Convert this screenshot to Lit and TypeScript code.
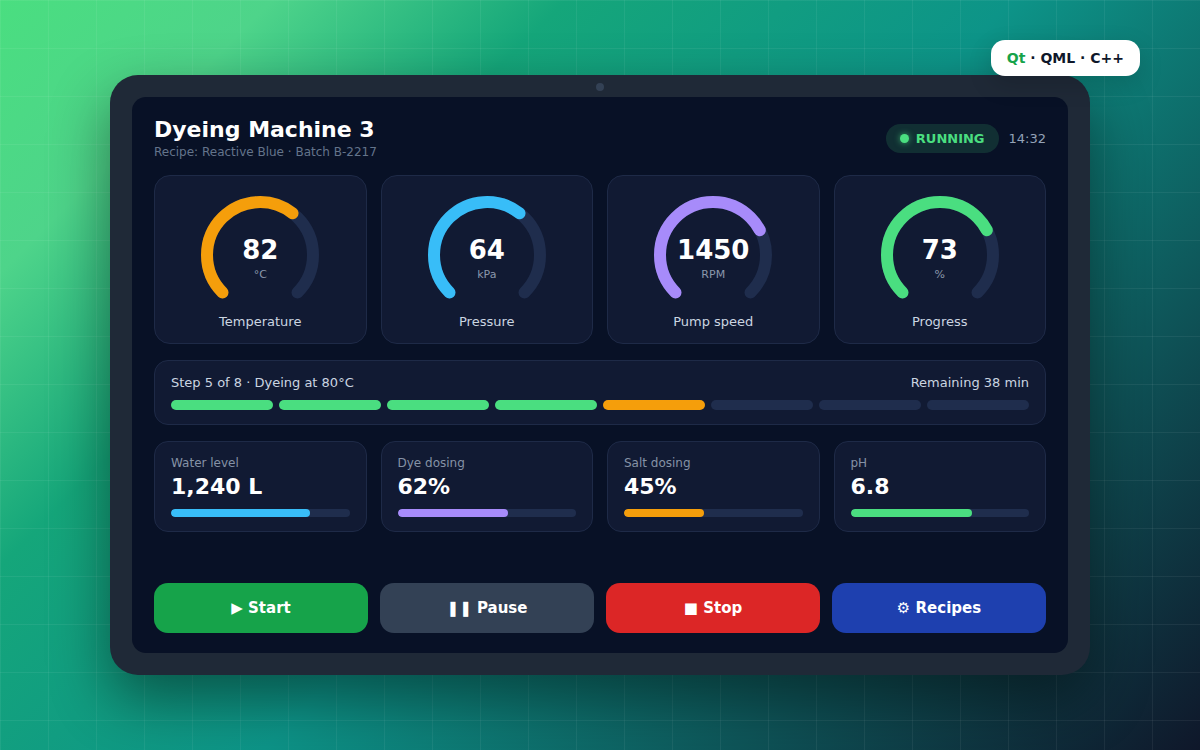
import {LitElement, html, css} from 'lit';
import {customElement} from 'lit/decorators.js';

const gauges = [
  {value: '82', unit: '°C', label: 'Temperature', color: '#f59e0b', frac: 0.64},
  {value: '64', unit: 'kPa', label: 'Pressure', color: '#38bdf8', frac: 0.64},
  {value: '1450', unit: 'RPM', label: 'Pump speed', color: '#a78bfa', frac: 0.73},
  {value: '73', unit: '%', label: 'Progress', color: '#4ade80', frac: 0.73},
];

const steps = ['#4ade80', '#4ade80', '#4ade80', '#4ade80', '#f59e0b', '', '', ''];

const tiles = [
  {label: 'Water level', value: '1,240 L', color: '#38bdf8', pct: 78},
  {label: 'Dye dosing', value: '62%', color: '#a78bfa', pct: 62},
  {label: 'Salt dosing', value: '45%', color: '#f59e0b', pct: 45},
  {label: 'pH', value: '6.8', color: '#4ade80', pct: 68},
];

const buttons = [
  {text: '▶ Start', cls: 'start'},
  {text: '❚❚ Pause', cls: 'pause'},
  {text: '■ Stop', cls: 'stop'},
  {text: '⚙ Recipes', cls: 'recipes'},
];

const arc = 'M22.5 97.5A53 53 0 1 1 97.5 97.5';

@customElement('app-root')
export class AppRoot extends LitElement {
  static styles = css`
    :host {
      display: flex;
      align-items: center;
      justify-content: center;
      position: relative;
      width: 1200px;
      height: 750px;
      overflow: hidden;
      font-family: 'DejaVu Sans', sans-serif;
      background:
        linear-gradient(rgba(255,255,255,0.06) 1px, transparent 1px) 0 0 / 48px 48px,
        linear-gradient(90deg, rgba(255,255,255,0.06) 1px, transparent 1px) 0 0 / 48px 48px,
        linear-gradient(135deg, #4ade80 0%, #4ed48a 14%, #15a67a 29%, #0d9488 52%, #0f172a 100%);
    }
    .tag {
      position: absolute;
      top: 40px;
      right: 60px;
      height: 36px;
      padding: 0 16px;
      display: flex;
      align-items: center;
      background: #fff;
      border-radius: 14px;
      font-size: 14px;
      font-weight: 700;
      color: #0f172a;
      white-space: pre;
      box-shadow: 0 8px 24px rgba(0,0,0,0.15);
    }
    .tag b { color: #16a34a; }
    .bezel {
      position: relative;
      box-sizing: border-box;
      width: 980px;
      height: 600px;
      padding: 22px;
      background: #1f2937;
      border-radius: 28px;
      box-shadow: 0 24px 60px rgba(0,0,0,0.45);
      display: flex;
    }
    .cam {
      position: absolute;
      top: 8px;
      left: 486px;
      width: 8px;
      height: 8px;
      border-radius: 50%;
      background: #334155;
    }
    .screen {
      flex: 1;
      box-sizing: border-box;
      padding: 20px 22px;
      background: #081126;
      border-radius: 14px;
      display: flex;
      flex-direction: column;
      min-width: 0;
    }
    header {
      display: flex;
      justify-content: space-between;
      align-items: center;
      margin-bottom: 16px;
    }
    h1 {
      margin: 0;
      font-size: 22px;
      line-height: 26px;
      font-weight: 700;
      color: #fff;
    }
    .sub { font-size: 12px; line-height: 14px; margin-top: 2px; color: #64748b; }
    .status { display: flex; align-items: center; gap: 10px; }
    .pill {
      display: flex;
      align-items: center;
      gap: 7px;
      height: 29px;
      padding: 0 14px;
      border-radius: 15px;
      background: rgba(74,222,128,0.15);
      color: #4ade80;
      font-size: 13px;
      font-weight: 700;
    }
    .dot {
      width: 9px;
      height: 9px;
      border-radius: 50%;
      background: #4ade80;
      box-shadow: 0 0 6px rgba(74,222,128,0.7);
    }
    .time { font-size: 13px; color: #94a3b8; }
    .gauges, .tiles {
      display: grid;
      grid-template-columns: repeat(4, 1fr);
      gap: 14px;
    }
    .card, .panel, .tile {
      box-sizing: border-box;
      background: #111a33;
      border: 1px solid #1e2a47;
    }
    .card {
      height: 169px;
      border-radius: 16px;
      padding: 19px 14px 0;
      display: flex;
      flex-direction: column;
      align-items: center;
    }
    .dial { position: relative; width: 120px; height: 119px; }
    .dial svg { display: block; overflow: visible; }
    .read {
      position: absolute;
      inset: 0;
      padding-top: 40px;
      display: flex;
      flex-direction: column;
      align-items: center;
    }
    .val { font-size: 26px; line-height: 30px; font-weight: 700; color: #fff; }
    .unit { font-size: 11px; line-height: 13px; color: #8a97ab; margin-top: 3px; }
    .name { font-size: 13px; line-height: 15px; color: #cbd5e1; }
    .panel {
      height: 65px;
      margin: 16px 0;
      border-radius: 14px;
      padding: 14px 16px;
    }
    .row {
      display: flex;
      justify-content: space-between;
      font-size: 13px;
      line-height: 15px;
      color: #cbd5e1;
    }
    .segs {
      display: grid;
      grid-template-columns: repeat(8, 1fr);
      gap: 6px;
      margin-top: 10px;
    }
    .seg { height: 10px; border-radius: 5px; background: #1f2d4d; }
    .tile {
      height: 91px;
      border-radius: 14px;
      padding: 14px 16px;
    }
    .tlabel { font-size: 12px; line-height: 14px; color: #8592a6; }
    .tval { font-size: 22px; line-height: 26px; font-weight: 700; color: #fff; margin-top: 4px; }
    .track { height: 8px; border-radius: 4px; background: #1f2d4d; margin-top: 9px; overflow: hidden; }
    .fill { height: 100%; border-radius: 4px; }
    .actions {
      margin-top: auto;
      display: grid;
      grid-template-columns: repeat(4, 1fr);
      gap: 12px;
    }
    button {
      height: 50px;
      border: 0;
      border-radius: 14px;
      font: 700 15px 'DejaVu Sans', sans-serif;
      color: #fff;
      padding: 0;
    }
    .start { background: #16a34a; }
    .pause { background: #334155; }
    .stop { background: #dc2626; }
    .recipes { background: #1e40af; }
  `;

  render() {
    return html`
      <div class="bezel">
        <div class="cam"></div>
        <div class="screen">
          <header>
            <div>
              <h1>Dyeing Machine 3</h1>
              <div class="sub">Recipe: Reactive Blue · Batch B-2217</div>
            </div>
            <div class="status">
              <div class="pill"><span class="dot"></span>RUNNING</div>
              <div class="time">14:32</div>
            </div>
          </header>
          <div class="gauges">
            ${gauges.map(g => html`
              <div class="card">
                <div class="dial">
                  <svg width="120" height="120" viewBox="0 0 120 120" fill="none" stroke-width="12" stroke-linecap="round">
                    <path d=${arc} stroke="#1f2d4d" pathLength="100"></path>
                    <path d=${arc} stroke=${g.color} pathLength="100" stroke-dasharray="${g.frac * 100} 200"></path>
                  </svg>
                  <div class="read">
                    <div class="val">${g.value}</div>
                    <div class="unit">${g.unit}</div>
                  </div>
                </div>
                <div class="name">${g.label}</div>
              </div>
            `)}
          </div>
          <div class="panel">
            <div class="row"><span>Step 5 of 8 · Dyeing at 80°C</span><span>Remaining 38 min</span></div>
            <div class="segs">
              ${steps.map(c => html`<div class="seg" style=${c ? `background:${c}` : ''}></div>`)}
            </div>
          </div>
          <div class="tiles">
            ${tiles.map(t => html`
              <div class="tile">
                <div class="tlabel">${t.label}</div>
                <div class="tval">${t.value}</div>
                <div class="track"><div class="fill" style="width:${t.pct}%;background:${t.color}"></div></div>
              </div>
            `)}
          </div>
          <div class="actions">
            ${buttons.map(b => html`<button class=${b.cls}>${b.text}</button>`)}
          </div>
        </div>
      </div>
      <div class="tag"><b>Qt</b> · QML · C++</div>
    `;
  }
}
